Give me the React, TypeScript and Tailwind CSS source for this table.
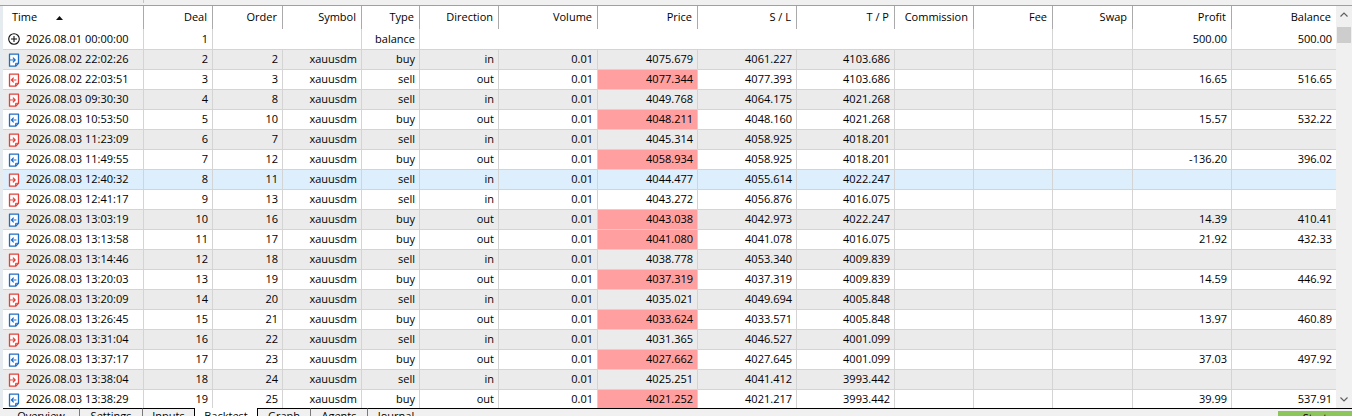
import React from "react";

type Col = { key: string; label: string; w: string };

const cols: Col[] = [
  { key: "time", label: "Time", w: "w-[140px]" },
  { key: "deal", label: "Deal", w: "w-[69px]" },
  { key: "order", label: "Order", w: "w-[70px]" },
  { key: "symbol", label: "Symbol", w: "w-[79px]" },
  { key: "type", label: "Type", w: "w-[58px]" },
  { key: "dir", label: "Direction", w: "w-[79px]" },
  { key: "vol", label: "Volume", w: "w-[99px]" },
  { key: "price", label: "Price", w: "w-[100px]" },
  { key: "sl", label: "S / L", w: "w-[99px]" },
  { key: "tp", label: "T / P", w: "w-[98px]" },
  { key: "comm", label: "Commission", w: "w-[79px]" },
  { key: "fee", label: "Fee", w: "w-[79px]" },
  { key: "swap", label: "Swap", w: "w-[80px]" },
  { key: "profit", label: "Profit", w: "w-[99px]" },
  { key: "balance", label: "Balance", w: "w-[105px]" },
];

// time, deal, order, type, direction, price, sl, tp, profit, balance
type Deal = [string, string, string, string, string, string, string, string, string, string];

const deals: Deal[] = [
  ["2026.08.02 22:02:26", "2", "2", "buy", "in", "4075.679", "4061.227", "4103.686", "", ""],
  ["2026.08.02 22:03:51", "3", "3", "sell", "out", "4077.344", "4077.393", "4103.686", "16.65", "516.65"],
  ["2026.08.03 09:30:30", "4", "8", "sell", "in", "4049.768", "4064.175", "4021.268", "", ""],
  ["2026.08.03 10:53:50", "5", "10", "buy", "out", "4048.211", "4048.160", "4021.268", "15.57", "532.22"],
  ["2026.08.03 11:23:09", "6", "7", "sell", "in", "4045.314", "4058.925", "4018.201", "", ""],
  ["2026.08.03 11:49:55", "7", "12", "buy", "out", "4058.934", "4058.925", "4018.201", "-136.20", "396.02"],
  ["2026.08.03 12:40:32", "8", "11", "sell", "in", "4044.477", "4055.614", "4022.247", "", ""],
  ["2026.08.03 12:41:17", "9", "13", "sell", "in", "4043.272", "4056.876", "4016.075", "", ""],
  ["2026.08.03 13:03:19", "10", "16", "buy", "out", "4043.038", "4042.973", "4022.247", "14.39", "410.41"],
  ["2026.08.03 13:13:58", "11", "17", "buy", "out", "4041.080", "4041.078", "4016.075", "21.92", "432.33"],
  ["2026.08.03 13:14:46", "12", "18", "sell", "in", "4038.778", "4053.340", "4009.839", "", ""],
  ["2026.08.03 13:20:03", "13", "19", "buy", "out", "4037.319", "4037.319", "4009.839", "14.59", "446.92"],
  ["2026.08.03 13:20:09", "14", "20", "sell", "in", "4035.021", "4049.694", "4005.848", "", ""],
  ["2026.08.03 13:26:45", "15", "21", "buy", "out", "4033.624", "4033.571", "4005.848", "13.97", "460.89"],
  ["2026.08.03 13:31:04", "16", "22", "sell", "in", "4031.365", "4046.527", "4001.099", "", ""],
  ["2026.08.03 13:37:17", "17", "23", "buy", "out", "4027.662", "4027.645", "4001.099", "37.03", "497.92"],
  ["2026.08.03 13:38:04", "18", "24", "sell", "in", "4025.251", "4041.412", "3993.442", "", ""],
  ["2026.08.03 13:38:29", "19", "25", "buy", "out", "4021.252", "4021.217", "3993.442", "39.99", "537.91"],
];

function DealIcon({ sell, out }: { sell: boolean; out: boolean }) {
  const c = sell ? "#e2403a" : "#1f6ec6";
  return (
    <svg width="12" height="14" viewBox="0 0 12 14" className="shrink-0">
      <path d="M1.5 1.2H10.5V10.2L7.6 13.2H1.5Z" fill="white" stroke={c} strokeWidth="1.3" strokeLinejoin="round" />
      <path d="M7.6 13V10.3H10.4" fill="none" stroke={c} strokeWidth="1" />
      {out ? (
        <path d="M3.4 7H8.4M5.7 4.7L3.4 7L5.7 9.3" fill="none" stroke={c} strokeWidth="1.2" />
      ) : (
        <path d="M1.5 7H7.2M4.9 4.7L7.2 7L4.9 9.3" fill="none" stroke={c} strokeWidth="1.2" />
      )}
    </svg>
  );
}

function BalanceIcon() {
  return (
    <svg width="12" height="12" viewBox="0 0 12 12" className="shrink-0">
      <circle cx="6" cy="6" r="5.3" fill="none" stroke="#111" strokeWidth="1.1" />
      <path d="M6 3V9M3 6H9" stroke="#111" strokeWidth="1.1" />
    </svg>
  );
}

function Cell({ w, children, first, noLine, pink }: { w: string; children?: React.ReactNode; first?: boolean; noLine?: boolean; pink?: boolean }) {
  return (
    <div
      className={`${w} shrink-0 h-full flex items-center justify-end pr-[4px] whitespace-nowrap ${
        first || noLine ? "" : "border-l border-[#d4d4d4]"
      } ${pink ? "bg-[#ff9f9f]" : ""}`}
    >
      {children}
    </div>
  );
}

function BalanceRow() {
  return (
    <div className="flex h-[20px] shrink-0 bg-white">
      <div className="w-[140px] shrink-0 h-full flex items-center pl-[5px] gap-[6px] whitespace-nowrap">
        <BalanceIcon />
        <span>2026.08.01 00:00:00</span>
      </div>
      <Cell w="w-[69px]">1</Cell>
      <Cell w="w-[70px]" />
      <Cell w="w-[79px]" noLine />
      <Cell w="w-[58px]">balance</Cell>
      <Cell w="w-[79px]" />
      <Cell w="w-[99px]" noLine />
      <Cell w="w-[100px]" noLine />
      <Cell w="w-[99px]" noLine />
      <Cell w="w-[98px]" noLine />
      <Cell w="w-[79px]" noLine />
      <Cell w="w-[79px]" />
      <Cell w="w-[80px]" />
      <Cell w="w-[99px]">500.00</Cell>
      <Cell w="w-[105px]">500.00</Cell>
    </div>
  );
}

function DealRow({ d, i }: { d: Deal; i: number }) {
  const [time, deal, order, type, dir, price, sl, tp, profit, balance] = d;
  const bg = i === 7 ? "bg-[#ddeefc]" : i % 2 === 1 ? "bg-[#ebebeb]" : "bg-white";
  const out = dir === "out";
  return (
    <div className={`flex h-[20px] shrink-0 border-t border-[#d4d4d4] ${bg}`}>
      <div className="w-[140px] shrink-0 h-full flex items-center pl-[5px] gap-[6px] whitespace-nowrap">
        <DealIcon sell={type === "sell"} out={out} />
        <span>{time}</span>
      </div>
      <Cell w="w-[69px]">{deal}</Cell>
      <Cell w="w-[70px]">{order}</Cell>
      <Cell w="w-[79px]">xauusdm</Cell>
      <Cell w="w-[58px]">{type}</Cell>
      <Cell w="w-[79px]">{dir}</Cell>
      <Cell w="w-[99px]">0.01</Cell>
      <Cell w="w-[100px]" pink={out}>{price}</Cell>
      <Cell w="w-[99px]">{sl}</Cell>
      <Cell w="w-[98px]">{tp}</Cell>
      <Cell w="w-[79px]" />
      <Cell w="w-[79px]" />
      <Cell w="w-[80px]" />
      <Cell w="w-[99px]">{profit}</Cell>
      <Cell w="w-[105px]">{balance}</Cell>
    </div>
  );
}

function Header() {
  return (
    <div className="flex h-[23px] shrink-0 bg-white">
      {cols.map((c, i) =>
        i === 0 ? (
          <div key={c.key} className={`${c.w} shrink-0 h-full flex items-center pl-[9px]`}>
            <span>{c.label}</span>
            <svg width="7" height="4" viewBox="0 0 7 4" className="ml-[19px]">
              <path d="M0 4L3.5 0L7 4Z" fill="#111" />
            </svg>
          </div>
        ) : (
          <div
            key={c.key}
            className={`${c.w} shrink-0 h-full flex items-center justify-end pr-[5px] border-l border-[#aaaaaa] whitespace-nowrap`}
          >
            {c.label}
          </div>
        )
      )}
    </div>
  );
}

function ScrollBar() {
  return (
    <div className="w-[16px] shrink-0 h-full flex flex-col bg-[#f0f0f0]">
      <div className="h-[17px] flex items-center justify-center">
        <svg width="8" height="5" viewBox="0 0 8 5">
          <path d="M0.5 4.5L4 1L7.5 4.5" fill="none" stroke="#606060" strokeWidth="1.2" />
        </svg>
      </div>
      <div className="mt-[4px] mx-[1px] h-[16px] bg-[#cdcdcd]" />
      <div className="flex-1" />
      <div className="h-[17px] flex items-center justify-center">
        <svg width="8" height="5" viewBox="0 0 8 5">
          <path d="M0.5 0.5L4 4L7.5 0.5" fill="none" stroke="#606060" strokeWidth="1.2" />
        </svg>
      </div>
    </div>
  );
}

const tabs = [
  { label: "Overview", w: "w-[77px]", sep: true },
  { label: "Settings", w: "w-[63px]", sep: true },
  { label: "Inputs", w: "w-[51px]", sep: false },
];
const tabsAfter = [
  { label: "Graph", w: "w-[53px]", sep: true },
  { label: "Agents", w: "w-[57px]", sep: true },
  { label: "Journal", w: "w-[56px]", sep: false },
];

function TabBar() {
  return (
    <div className="flex h-[24px] shrink-0 items-stretch bg-[#f0f0f0]">
      <div className="w-[3px] shrink-0" />
      {tabs.map((t) => (
        <div
          key={t.label}
          className={`${t.w} shrink-0 border-t border-black text-center leading-[14px] ${t.sep ? "border-r border-r-[#7a7a7a]" : ""}`}
        >
          {t.label}
        </div>
      ))}
      <div className="w-[64px] shrink-0 bg-white border-l border-r border-black text-center leading-[14px] pt-[1px]">
        Backtest
      </div>
      {tabsAfter.map((t) => (
        <div
          key={t.label}
          className={`${t.w} shrink-0 border-t border-black text-center leading-[14px] ${t.sep ? "border-r border-r-[#7a7a7a]" : ""}`}
        >
          {t.label}
        </div>
      ))}
      <div className="flex-1 border-t border-black" />
      <div className="w-[74px] shrink-0 border-t border-black">
        <div className="mt-[2px] h-[20px] bg-[#8cc65a] text-center leading-[14px]">Start</div>
      </div>
    </div>
  );
}

export default function App() {
  return (
    <div className="w-[1352px] h-[416px] overflow-hidden bg-[#f0f0f0] flex flex-col text-[11px] text-black font-['Open_Sans',sans-serif]">
      <div className="h-[5px] shrink-0 flex">
        <div className="w-[143px]" />
        <div className="w-px h-[3px] bg-[#c4c4c4]" />
      </div>
      <div className="flex h-[403px] shrink-0 border-t border-[#a0a0a0]">
        <div className="w-[3px] shrink-0 bg-[#e6ebf0]" />
        <div className="w-[1333px] shrink-0 h-full flex flex-col overflow-hidden bg-white">
          <Header />
          <BalanceRow />
          {deals.map((d, i) => (
            <DealRow key={d[1]} d={d} i={i + 1} />
          ))}
        </div>
        <ScrollBar />
      </div>
      <TabBar />
    </div>
  );
}
